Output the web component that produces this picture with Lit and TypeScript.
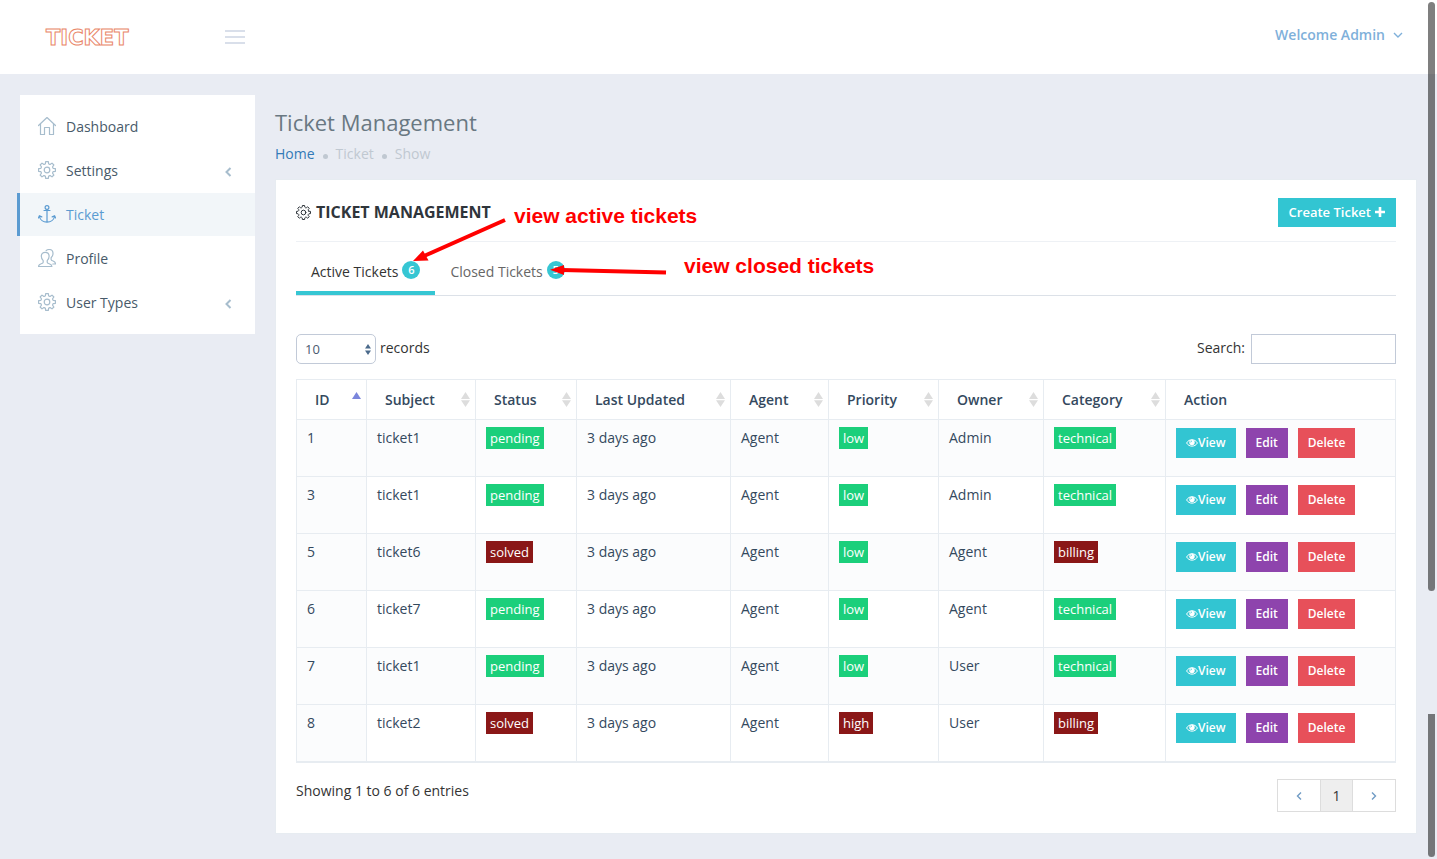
import { LitElement, html, css, svg } from "lit";
import { customElement } from "lit/decorators.js";
import { classMap } from "lit/directives/class-map.js";

interface Ticket {
  id: number;
  subject: string;
  status: string;
  priority: string;
  owner: string;
  category: string;
}

const tickets: Ticket[] = [
  { id: 1, subject: "ticket1", status: "pending", priority: "low", owner: "Admin", category: "technical" },
  { id: 3, subject: "ticket1", status: "pending", priority: "low", owner: "Admin", category: "technical" },
  { id: 5, subject: "ticket6", status: "solved", priority: "low", owner: "Agent", category: "billing" },
  { id: 6, subject: "ticket7", status: "pending", priority: "low", owner: "Agent", category: "technical" },
  { id: 7, subject: "ticket1", status: "pending", priority: "low", owner: "User", category: "technical" },
  { id: 8, subject: "ticket2", status: "solved", priority: "high", owner: "User", category: "billing" },
];

const columns = ["ID", "Subject", "Status", "Last Updated", "Agent", "Priority", "Owner", "Category"];
const alertTags = new Set(["solved", "high", "billing"]);

// Eight-toothed gear outline around the centre of an 18 unit box.
const gearPath = (() => {
  const at = (deg: number, r: number) => {
    const a = (deg * Math.PI) / 180;
    return `${(9 + r * Math.cos(a)).toFixed(2)} ${(9 + r * Math.sin(a)).toFixed(2)}`;
  };
  let d = "";
  for (let i = 0; i < 8; i++) {
    const c = i * 45;
    d += `${i ? "L" : "M"}${at(c - 14, 6.6)}L${at(c - 9, 8.5)}L${at(c + 9, 8.5)}L${at(c + 14, 6.6)}Q${at(c + 22.5, 5.8)} ${at(c + 31, 6.6)}`;
  }
  return d + "Z";
})();

const glyphs = {
  home: svg`<path d="M.5 8.500 9 .5 17.500 8.500M2.500 7v10.500h4V10.500h5v7h4V7"/>`,
  gear: svg`<path d=${gearPath}/><circle cx="9" cy="9" r="2.800"/>`,
  anchor: svg`<circle cx="9" cy="2.500" r="1.900"/><path d="M9 4.500V17M6 5.500h6M1.500 11.500c.6 3.400 3.800 5.600 7.500 5.600s6.900-2.200 7.500-5.600M.4 13l1-2.300 2.400 1.200M17.600 13l-1-2.300-2.400 1.200"/>`,
  users: svg`<path d="M7.200 3.300C4.800 3.300 3.300 5 3.300 7.300c0 1.800.8 3.300 1.900 4.300v1.600c0 .8-.8 1.200-2 1.600C1.500 15.400.5 15.800.5 17.500h13.400c0-1.700-1-2.100-2.700-2.700-1.200-.4-2-.8-2-1.600v-1.600c1.100-1 1.900-2.500 1.900-4.300 0-2.300-1.500-4-3.900-4Z"/><path d="M8.200 1.500C9 .8 10 .5 11.100.5 13.500.5 15 2.200 15 4.500c0 1.800-.8 3.300-1.900 4.300v1.600c0 .8.8 1.200 2 1.600 1.500.6 2.400 1 2.400 3h-2.700"/>`,
};

const menu: { label: string; icon: keyof typeof glyphs; active?: boolean; sub?: boolean }[] = [
  { label: "Dashboard", icon: "home" },
  { label: "Settings", icon: "gear", sub: true },
  { label: "Ticket", icon: "anchor", active: true },
  { label: "Profile", icon: "users" },
  { label: "User Types", icon: "gear", sub: true },
];

const icon = (name: keyof typeof glyphs, size = 18) => html`
  <svg class="line" width=${size} height=${size} viewBox="0 0 18 18" aria-hidden="true">${glyphs[name]}</svg>`;

const angle = (d: string, cls = "angle") => html`
  <svg class=${cls} width="10" height="10" viewBox="0 0 10 10" aria-hidden="true"><path d=${d} /></svg>`;

@customElement("app-root")
export class AppRoot extends LitElement {
  static styles = css`
    :host {
      display: block;
      position: relative;
      min-height: 100vh;
      background: #e9ecf3;
      color: #333;
      font: 14px/20px "Open Sans", "Noto Sans", sans-serif;
    }
    * { box-sizing: border-box; }
    a { color: inherit; text-decoration: none; }
    button, input, select { font: inherit; border-radius: 0; margin: 0; }
    button { border: 0; cursor: pointer; }
    svg { display: block; flex: none; }
    .line, .angle, .bold-angle { fill: none; stroke: currentColor; }
    .line { stroke-width: 1.2; stroke-linejoin: round; stroke-linecap: round; }
    .angle { stroke-width: 1.4; }
    .bold-angle { stroke-width: 2; }

    header {
      display: flex;
      align-items: center;
      height: 74px;
      padding: 0 34px 0 46px;
      background: #fff;
    }
    .brand {
      display: flex;
      align-items: center;
      justify-content: space-between;
      width: 199px;
    }
    .logo {
      padding-top: 2px;
      font: bold 21px/24px "DejaVu Sans", sans-serif;
      color: #fff;
      -webkit-text-stroke: 1px #e98567;
    }
    .toggle {
      display: grid;
      gap: 4px;
      padding: 0;
      background: none;
    }
    .toggle span { width: 20px; height: 2px; background: #d9dfea; }
    .user {
      display: flex;
      align-items: center;
      gap: 8px;
      margin-left: auto;
      padding: 0 0 4px;
      background: none;
      color: #7fb0da;
      font-weight: 600;
    }

    .page {
      display: grid;
      grid-template-columns: 235px minmax(0, 1fr);
      gap: 20px;
      align-items: start;
      padding: 21px 20px 25px;
    }
    .menu {
      display: grid;
      gap: 1px;
      padding: 10px 0;
      background: #fff;
    }
    .item {
      display: flex;
      align-items: center;
      gap: 10px;
      height: 43px;
      padding: 0 22px 0 18px;
      color: #485a6a;
    }
    .item .line { margin-bottom: 1px; color: #a7bdcd; }
    .item .bold-angle { margin: 2px 0 0 auto; color: #a7bdcd; }
    .item.active {
      margin-left: -3px;
      border-left: 3px solid #5b9bd1;
      background: #f2f6f9;
      color: #5b9bd1;
    }
    .item.active .line { color: #5b9bd1; }

    h1 {
      margin: 12px 0 7px;
      color: #697882;
      font-size: 22px;
      font-weight: 400;
      line-height: 30px;
    }
    .crumbs {
      display: flex;
      align-items: center;
      gap: 8px;
      margin-bottom: 15px;
      color: #c0c8d1;
    }
    .crumbs a { color: #337ab7; }
    .dot { width: 5px; height: 5px; margin-top: 4px; border-radius: 50%; background: #c0c8d1; }
    .panel {
      padding: 12px 20px 20px;
      border: 1px solid #e7ecf1;
      background: #fff;
    }
    .panel-head {
      display: flex;
      align-items: center;
      justify-content: space-between;
      height: 50px;
      margin-bottom: 10px;
      padding-bottom: 9px;
      border-bottom: 1px solid #eef1f5;
    }
    h2 {
      display: flex;
      align-items: center;
      gap: 5px;
      margin: 0;
      color: #2f353b;
      font-size: 16px;
      font-weight: 700;
      line-height: 22px;
    }
    .create {
      display: flex;
      align-items: center;
      gap: 4px;
      height: 29px;
      padding: 0 11px;
      background: #32c5d2;
      color: #fff;
      font-size: 13px;
      font-weight: 600;
    }
    .create svg { fill: #fff; }
    .tabs { display: flex; height: 44px; border-bottom: 1px solid #dce1e8; }
    .tab {
      display: flex;
      gap: 4px;
      align-items: center;
      height: 43px;
      padding: 0 15px;
      border-bottom: 4px solid transparent;
      background: none;
      color: #666;
    }
    .tab.on { border-color: #36c6d3; color: #333; }
    .count {
      width: 18px;
      height: 18px;
      margin-bottom: 3px;
      border-radius: 9px;
      background: #36c6d3;
      color: #fff;
      font-size: 11px;
      font-weight: 600;
      line-height: 18px;
      text-align: center;
    }

    .controls {
      display: flex;
      justify-content: space-between;
      margin: 38px 0 15px;
    }
    .controls label { display: flex; gap: 4px; line-height: 28px; }
    .controls .search { gap: 6px; }
    .pick { display: grid; align-items: center; }
    .pick > * { grid-area: 1 / 1; }
    .pick svg { justify-self: end; margin-right: 5px; fill: #4b6a8b; pointer-events: none; }
    select {
      appearance: none;
      width: 80px;
      height: 30px;
      padding: 0 8px 1px;
      border: 1px solid #c2cad8;
      background: #fff;
      color: #4b5a70;
      font-size: 13px;
    }
    .pick select { border-radius: 5px; }
    input {
      width: 145px;
      height: 30px;
      padding: 4px 8px;
      border: 1px solid #c2cad8;
    }

    table {
      width: 100%;
      table-layout: fixed;
      border-collapse: collapse;
      border-bottom: 2px solid #e7ecf1;
      color: #34495e;
    }
    th, td { border: 1px solid #e7ecf1; text-align: left; }
    th { height: 40px; padding: 0 5px 0 18px; font-weight: 600; }
    .head { display: flex; align-items: center; justify-content: space-between; white-space: nowrap; }
    .head svg { fill: #ddd; }
    .head .up { fill: #7b86dc; }
    td { height: 57px; padding: 8px 10px; vertical-align: top; }
    tbody tr:nth-child(odd), td:first-child { background: #fbfcfd; }
    .c-id { width: 70px; }
    .c-subject { width: 109px; }
    .c-status { width: 101px; }
    .c-updated { width: 154px; }
    .c-agent { width: 98px; }
    .c-priority { width: 110px; }
    .c-owner { width: 105px; }
    .c-category { width: 122px; }
    .tag { padding: 2px 4px; background: #1bcf7b; color: #fff; font-size: 13px; }
    .tag.alert { background: #8a1717; }
    .actions { display: flex; gap: 10px; }
    .actions button {
      display: flex;
      align-items: center;
      height: 30px;
      padding: 0 10px;
      color: #fff;
      font-size: 12px;
      font-weight: 600;
    }
    .actions .view { background: #32c5d2; }
    .actions .edit { background: #8e44ad; }
    .actions .delete { background: #e7505a; }

    .foot {
      display: flex;
      justify-content: space-between;
      align-items: start;
      margin: 16px 0 1px;
    }
    .foot p { margin: 2px 0; }
    .pager { display: flex; border: 1px solid #ddd; }
    .pager a {
      display: grid;
      place-items: center;
      width: 42px;
      height: 31px;
      padding-top: 2px;
      color: #6f9bc4;
    }
    .pager .current {
      width: 33px;
      border: solid #ddd;
      border-width: 0 1px;
      background: #eee;
      color: #333;
    }

    .note {
      position: absolute;
      color: #f00;
      font: bold 21px/24px "Liberation Sans", Arial, sans-serif;
      white-space: nowrap;
    }
    .note-active { left: 514px; top: 204px; }
    .note-closed { left: 684px; top: 254px; }
    .arrows { position: absolute; left: 400px; top: 210px; pointer-events: none; }
    .thumb { position: absolute; right: 2px; width: 7px; background: rgba(0, 0, 0, 0.5); }
    .thumb-top { top: 2px; height: 589px; border-radius: 4px; }
    .thumb-end { bottom: 2px; height: 143px; border-radius: 0 0 4px 4px; }
  `;

  private tag(text: string) {
    return html`<span class=${classMap({ tag: true, alert: alertTags.has(text) })}>${text}</span>`;
  }

  private row(t: Ticket) {
    return html`<tr>
      <td>${t.id}</td>
      <td>${t.subject}</td>
      <td>${this.tag(t.status)}</td>
      <td>3 days ago</td>
      <td>Agent</td>
      <td>${this.tag(t.priority)}</td>
      <td>${t.owner}</td>
      <td>${this.tag(t.category)}</td>
      <td>
        <div class="actions">
          <button class="view">
            <svg width="12" height="10" viewBox="0 0 12 10" aria-hidden="true">
              <path fill="none" stroke="#fff" d="M.6 5C3 .6 9 .6 11.400 5 9 9.200 3 9.200.6 5Z" />
              <circle cx="6" cy="4.500" r="2.700" fill="#fff" />
              <path fill="none" stroke="#32c5d2" stroke-width=".7" d="M4.600 4.400c0-.9.600-1.400 1.400-1.400" />
            </svg>View
          </button>
          <button class="edit">Edit</button>
          <button class="delete">Delete</button>
        </div>
      </td>
    </tr>`;
  }

  render() {
    return html`
      <header>
        <div class="brand">
          <a class="logo" href="#">TICKET</a>
          <button class="toggle" aria-label="Toggle menu"><span></span><span></span><span></span></button>
        </div>
        <button class="user">Welcome Admin ${angle("M1 3l4 4 4-4")}</button>
      </header>

      <div class="page">
        <nav class="menu">
          ${menu.map(
            (m) => html`<a href="#" class=${classMap({ item: true, active: !!m.active })}>
              ${icon(m.icon)}<span>${m.label}</span>${m.sub ? angle("M7.500 1 3.500 5l4 4", "bold-angle") : ""}
            </a>`
          )}
        </nav>

        <main>
          <h1>Ticket Management</h1>
          <div class="crumbs">
            <a href="#">Home</a><span class="dot"></span><span>Ticket</span><span class="dot"></span><span>Show</span>
          </div>

          <section class="panel">
            <div class="panel-head">
              <h2>${icon("gear", 15)} TICKET MANAGEMENT</h2>
              <button class="create">
                Create Ticket
                <svg width="10" height="10" viewBox="0 0 10 10" aria-hidden="true">
                  <path d="M3.700 0h2.600v3.700H10v2.600H6.300V10H3.700V6.300H0V3.700h3.700Z" />
                </svg>
              </button>
            </div>

            <div class="tabs">
              <button class="tab on">Active Tickets <span class="count">6</span></button>
              <button class="tab">Closed Tickets <span class="count">5</span></button>
            </div>

            <div class="controls">
              <label>
                <span class="pick">
                  <select><option>10</option><option>25</option><option>50</option></select>
                  <svg width="6" height="11" viewBox="0 0 6 11" aria-hidden="true">
                    <path d="M0 4.500 3 0l3 4.500ZM0 6.500 3 11l3-4.500Z" />
                  </svg>
                </span>
                records
              </label>
              <label class="search">Search: <input type="search" /></label>
            </div>

            <table>
              <colgroup>
                <col class="c-id" /><col class="c-subject" /><col class="c-status" /><col class="c-updated" />
                <col class="c-agent" /><col class="c-priority" /><col class="c-owner" /><col class="c-category" /><col />
              </colgroup>
              <thead>
                <tr>
                  ${columns.map(
                    (c, i) => html`<th scope="col"><div class="head">${c}
                      <svg width="9" height="15" viewBox="0 0 9 15" aria-hidden="true">
                        ${i === 0
                          ? svg`<path class="up" d="M0 7 4.500 0 9 7Z"/>`
                          : svg`<path d="M0 7 4.500 0 9 7ZM0 8.200h9L4.500 15Z"/>`}
                      </svg></div></th>`
                  )}
                  <th scope="col">Action</th>
                </tr>
              </thead>
              <tbody>${tickets.map((t) => this.row(t))}</tbody>
            </table>

            <div class="foot">
              <p>Showing 1 to 6 of 6 entries</p>
              <nav class="pager" aria-label="Pages">
                <a href="#" aria-label="Previous">${angle("M7 1.500 3.500 5 7 8.500")}</a>
                <a href="#" class="current">1</a>
                <a href="#" aria-label="Next">${angle("M3 1.500 6.500 5 3 8.500")}</a>
              </nav>
            </div>
          </section>
        </main>
      </div>

      <svg class="arrows" width="270" height="70" viewBox="0 0 270 70" aria-hidden="true">
        <g fill="#f00" stroke="#f00">
          <path stroke-width="4" d="M105 10 24 46" />
          <path stroke="none" d="M13 51 23 40.500 28.500 50.500Z" />
          <path stroke-width="4" d="M266 62.500 162 60" />
          <path stroke="none" d="M150 59.700 164 55 164 65Z" />
        </g>
      </svg>
      <span class="note note-active">view active tickets</span>
      <span class="note note-closed">view closed tickets</span>
      <span class="thumb thumb-top"></span>
      <span class="thumb thumb-end"></span>
    `;
  }
}
